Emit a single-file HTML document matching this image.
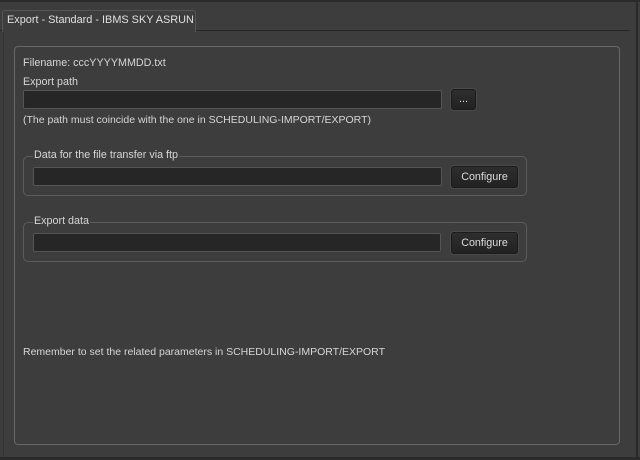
<!DOCTYPE html>
<html><head><style>
*{margin:0;padding:0;box-sizing:border-box}
body{width:640px;height:460px;background:#3d3d3d;position:relative;overflow:hidden;font-family:"Liberation Sans",sans-serif;font-size:10.75px;color:#d6d6d6}
.a{position:absolute}
.inp{position:absolute;background:#262626;border:1px solid #555;border-radius:2px}
.btn{position:absolute;background:linear-gradient(#2e2e2e,#222);border:1px solid #1a1a1a;box-shadow:0 0 0 1px #4a4a4a;border-radius:3px;color:#ddd;text-align:center}
.grp{position:absolute;border:1px solid #5c5c5c;border-radius:5px}
.lg{position:absolute;background:#3d3d3d;padding:0 1px;line-height:12px}
.t{position:absolute;white-space:nowrap;line-height:12px}
</style></head><body>
<div class="a" style="left:0;top:0;width:640px;height:2px;background:#2a2a2a"></div>
<div class="a" style="left:0;top:30px;width:630px;height:1px;background:#262626"></div>
<div class="a" style="left:636px;top:0;width:2px;height:460px;background:#2a2a2a"></div>
<div class="a" style="left:0;top:457px;width:640px;height:3px;background:#2a2a2a"></div>
<div class="a" style="left:3px;top:31px;width:1px;height:426px;background:#333"></div>
<div class="a" style="left:2px;top:10px;width:194px;height:22px;background:#3d3d3d;border:1px solid #555;border-bottom:none;border-radius:3px 3px 0 0"></div>
<div class="t" style="left:7px;top:14px;color:#e0e0e0;font-size:10.9px">Export - Standard - IBMS SKY ASRUN</div>
<div class="a" style="left:14px;top:46px;width:606px;height:399px;border:1px solid #686868;border-radius:4px"></div>
<div class="t" style="left:23px;top:57px">Filename: cccYYYYMMDD.txt</div>
<div class="t" style="left:23px;top:76px">Export path</div>
<div class="inp" style="left:23px;top:90px;width:419px;height:19px"></div>
<div class="btn" style="left:451px;top:89px;width:25px;height:21px;line-height:18px">...</div>
<div class="t" style="left:23px;top:114px;font-size:10.5px">(The path must coincide with the one in SCHEDULING-IMPORT/EXPORT)</div>
<div class="grp" style="left:23px;top:156px;width:504px;height:40px"></div>
<div class="lg" style="left:33px;top:149px">Data for the file transfer via ftp</div>
<div class="inp" style="left:33px;top:167px;width:409px;height:19px"></div>
<div class="btn" style="left:451px;top:166px;width:67px;height:22px;line-height:21px">Configure</div>
<div class="grp" style="left:23px;top:222px;width:504px;height:40px"></div>
<div class="lg" style="left:33px;top:215px">Export data</div>
<div class="inp" style="left:33px;top:233px;width:408px;height:19px"></div>
<div class="btn" style="left:451px;top:232px;width:67px;height:22px;line-height:21px">Configure</div>
<div class="t" style="left:23px;top:346px;font-size:10.5px">Remember to set the related parameters in SCHEDULING-IMPORT/EXPORT</div>
</body></html>
